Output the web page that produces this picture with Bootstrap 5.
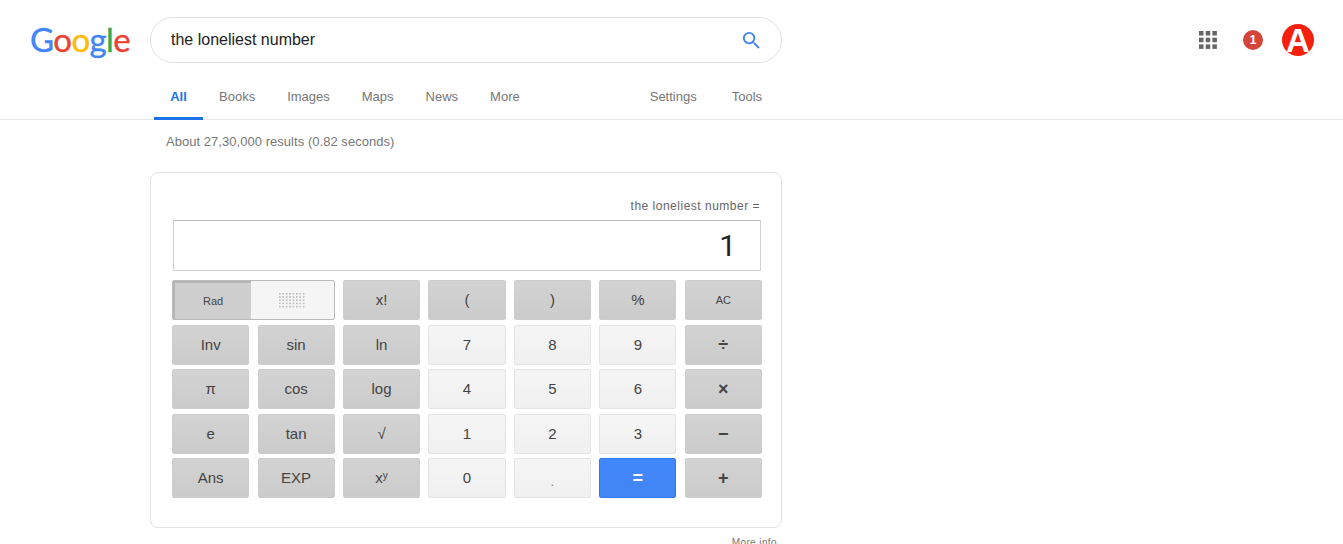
<!DOCTYPE html>
<html lang="en">
<head>
    <meta charset="UTF-8">
    <meta name="viewport" content="width=device-width, initial-scale=1.0">
    <title>the loneliest number - Google Search</title>
    <link href="https://cdn.jsdelivr.net/npm/bootstrap@5.3.0/dist/css/bootstrap.min.css" rel="stylesheet">
    <script src="https://cdn.jsdelivr.net/npm/bootstrap@5.3.0/dist/js/bootstrap.bundle.min.js"></script>
    <style>
        body { font-family: "Liberation Sans", Arial, sans-serif; background: #fff; height: 544px; overflow: hidden; }
        .top-bar { height: 79px; padding: 17px 29px 0 30px; }
        .logo-text { width: 120px; height: 45px; font-family: Lato, sans-serif; font-size: 33px; letter-spacing: -.6px; line-height: 44px; -webkit-text-stroke: .4px; }
        .search-box { width: 632px; height: 46px; border: 1px solid #dfe1e5; border-radius: 23px; padding: 0 18px 0 20px; font-size: 16px; color: #222; }
        .top-icons { margin-top: 7px; }
        .grid-icon { margin-right: 26px; }
        .notif { width: 20px; height: 20px; margin-right: 19px; background: #d5443a; color: #fff; font-size: 12px; font-weight: 700; }
        .avatar { width: 32px; height: 32px; background: #f4200c; color: #fff; font-size: 33px; font-weight: 700; line-height: 34px; overflow: hidden; }
        .tab-row { height: 41px; border-bottom: 1px solid #e6e6e6; padding-left: 154px; font-size: 13px; color: #777; }
        .tab-link { color: #777; text-decoration: none; padding: 8px 16px 0; height: 41px; }
        .tab-link.current { color: #1a73e8; font-weight: 700; border-bottom: 3px solid #1a73e8; width: 49px; padding-left: 0; padding-right: 0; text-align: center; }
        .tab-settings { margin-left: 98px; }
        .tab-tools { margin-left: 3px; }
        .result-stats { padding: 14px 0 0 166px; height: 52px; font-size: 13px; letter-spacing: .04px; color: #777; line-height: 16px; }
        .calc-card { width: 632px; height: 356px; margin-left: 150px; border: 1px solid #e2e2e2; border-radius: 8px; padding: 26px 19px 0 21.1px; }
        .calc-label { font-size: 12px; letter-spacing: .5px; color: #666; text-align: right; line-height: 14px; margin-right: 2px; }
        .calc-display { height: 51px; margin: 7px 1px 9px .9px; border: 1px solid #d0d0d0; border-top-color: #bbb; padding-right: 24px; font-size: 30px; line-height: 49px; color: #222; text-align: right; font-family: Roboto, sans-serif; }
        .key-grid { display: grid; grid-template-columns: repeat(7, 77.15px); column-gap: 8.3px; grid-template-rows: repeat(5, 40px); row-gap: 4.5px; }
        .calc-key { border: 1px solid #d4d4d4; border-radius: 2px; font-size: 15px; color: #444; padding: 1px 0 0; display: flex; align-items: center; justify-content: center; }
        .key-gray { background: linear-gradient(#d3d3d3, #cbcbcb); border-color: #cdcdcd; }
        .key-light { background: linear-gradient(#f5f5f5, #f0f0f0); border-color: #e4e4e4; }
        .key-blue { background: linear-gradient(#4387fd, #4285f4); border-color: #3079ed; color: #fff; font-weight: 700; font-size: 18px; }
        .key-sm { font-size: 11px; }
        .key-bold { font-weight: 700; font-size: 18px; }
        .key-toggle { grid-column: span 2; border: 1px solid #bbb; border-radius: 2px; background: #f5f5f5; }
        .toggle-rad { width: 78px; background: #cfcfcf; border-left: 2px solid #b5b5b5; border-top: 2px solid #b5b5b5; font-size: 11px; color: #444; }
        .key-dot { color: #888; font-size: 13px; padding-top: 8px; }
        .key-grid sup { font-size: 10px; top: -.4em; }
        .more-info { width: 777px; margin: 7px 0 0 0; font-size: 10px; letter-spacing: .4px; color: #777; text-align: right; }
    </style>
</head>
<body>
    <div class="top-bar d-flex align-items-start">
        <div class="logo-text"><span style="color:#4285f4">G</span><span style="color:#ea4335">o</span><span style="color:#fbbc05">o</span><span style="color:#4285f4">g</span><span style="color:#34a853">l</span><span style="color:#ea4335">e</span></div>
        <div class="search-box d-flex align-items-center justify-content-between">
            <span>the loneliest number</span>
            <svg width="23" height="23" viewBox="0 0 24 24" fill="#4285f4"><path d="M15.5 14h-.79l-.28-.27A6.47 6.47 0 0 0 16 9.5 6.5 6.5 0 1 0 9.5 16c1.61 0 3.09-.59 4.23-1.57l.27.28v.79l5 4.99L20.49 19l-4.99-5zm-6 0C7.01 14 5 11.99 5 9.5S7.01 5 9.5 5 14 7.01 14 9.5 11.99 14 9.5 14z"/></svg>
        </div>
        <div class="top-icons ms-auto d-flex align-items-center">
            <svg class="grid-icon" width="18" height="18" viewBox="0 0 18 18" fill="#666"><rect x="0" y="0" width="4.5" height="4.5"/><rect x="6.7" y="0" width="4.5" height="4.5"/><rect x="13.4" y="0" width="4.5" height="4.5"/><rect x="0" y="6.7" width="4.5" height="4.5"/><rect x="6.7" y="6.7" width="4.5" height="4.5"/><rect x="13.4" y="6.7" width="4.5" height="4.5"/><rect x="0" y="13.4" width="4.5" height="4.5"/><rect x="6.7" y="13.4" width="4.5" height="4.5"/><rect x="13.4" y="13.4" width="4.5" height="4.5"/></svg>
            <div class="notif rounded-circle d-flex align-items-center justify-content-center">1</div>
            <div class="avatar rounded-circle text-center">A</div>
        </div>
    </div>

    <div class="tab-row d-flex">
        <a class="tab-link current" href="#">All</a>
        <a class="tab-link" href="#">Books</a>
        <a class="tab-link" href="#">Images</a>
        <a class="tab-link" href="#">Maps</a>
        <a class="tab-link" href="#">News</a>
        <a class="tab-link" href="#">More</a>
        <a class="tab-link tab-settings" href="#">Settings</a>
        <a class="tab-link tab-tools" href="#">Tools</a>
    </div>

    <div class="result-stats">About 27,30,000 results (0.82 seconds)</div>

    <div class="calc-card">
        <div class="calc-label">the loneliest number =</div>
        <div class="calc-display">1</div>
        <div class="key-grid">
            <div class="key-toggle d-flex">
                <div class="toggle-rad d-flex align-items-center justify-content-center">Rad</div>
                <div class="flex-grow-1 d-flex align-items-center justify-content-center">
                    <svg width="27" height="15" viewBox="0 0 27 15" fill="#bbb">
                        <defs><pattern id="dots" width="3.4" height="3.2" patternUnits="userSpaceOnUse"><rect width="1.6" height="1.6"/></pattern></defs>
                        <rect width="27" height="15" fill="url(#dots)"/>
                    </svg>
                </div>
            </div>
            <div class="calc-key key-gray">x!</div>
            <div class="calc-key key-gray">(</div>
            <div class="calc-key key-gray">)</div>
            <div class="calc-key key-gray">%</div>
            <div class="calc-key key-gray key-sm">AC</div>

            <div class="calc-key key-gray">Inv</div>
            <div class="calc-key key-gray">sin</div>
            <div class="calc-key key-gray">ln</div>
            <div class="calc-key key-light">7</div>
            <div class="calc-key key-light">8</div>
            <div class="calc-key key-light">9</div>
            <div class="calc-key key-gray key-bold">÷</div>

            <div class="calc-key key-gray">π</div>
            <div class="calc-key key-gray">cos</div>
            <div class="calc-key key-gray">log</div>
            <div class="calc-key key-light">4</div>
            <div class="calc-key key-light">5</div>
            <div class="calc-key key-light">6</div>
            <div class="calc-key key-gray key-bold">×</div>

            <div class="calc-key key-gray">e</div>
            <div class="calc-key key-gray">tan</div>
            <div class="calc-key key-gray">√</div>
            <div class="calc-key key-light">1</div>
            <div class="calc-key key-light">2</div>
            <div class="calc-key key-light">3</div>
            <div class="calc-key key-gray key-bold">−</div>

            <div class="calc-key key-gray">Ans</div>
            <div class="calc-key key-gray">EXP</div>
            <div class="calc-key key-gray"><span>x<sup>y</sup></span></div>
            <div class="calc-key key-light">0</div>
            <div class="calc-key key-light key-dot">.</div>
            <div class="calc-key key-blue">=</div>
            <div class="calc-key key-gray key-bold">+</div>
        </div>
    </div>
    <div class="more-info">More info</div>
</body>
</html>
